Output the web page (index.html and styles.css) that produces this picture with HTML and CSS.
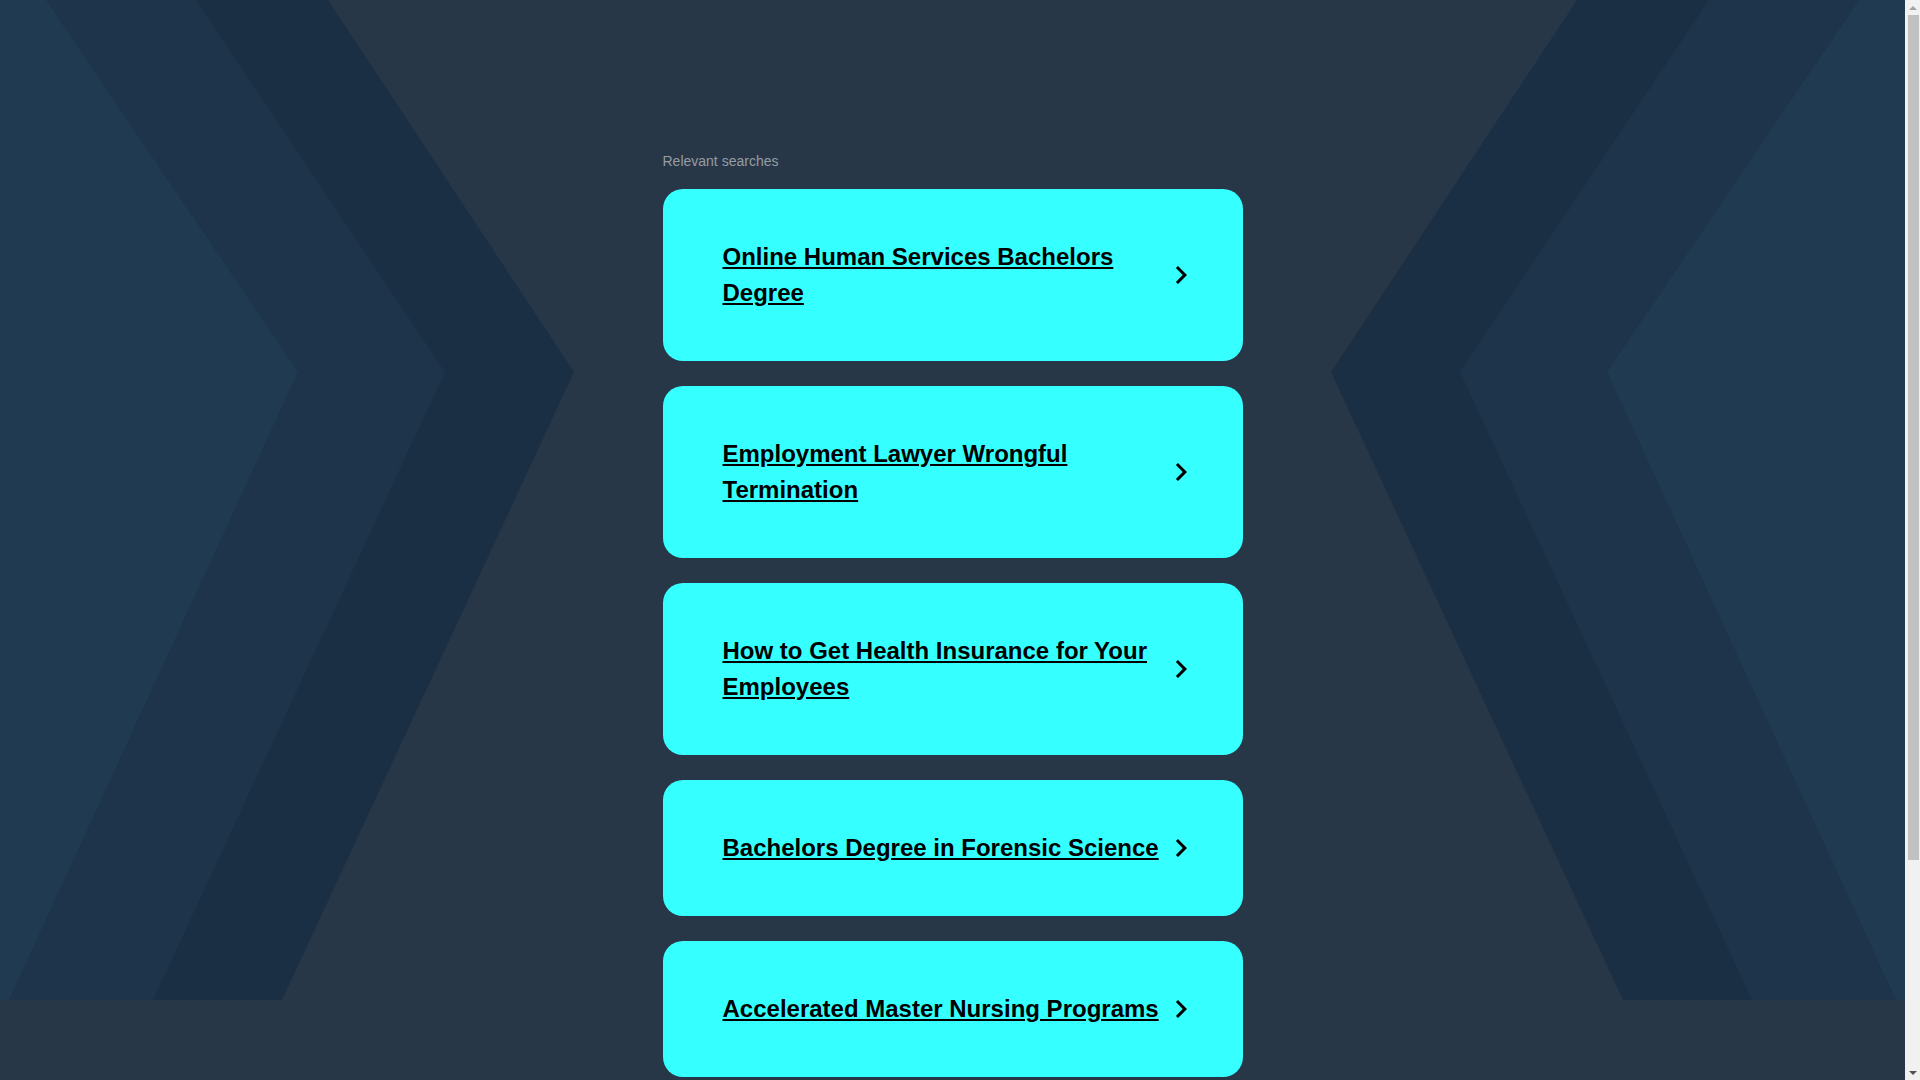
FILE: index.html
```html
<!DOCTYPE html>
<html lang="en">
<head>
<meta charset="utf-8">
<title>Relevant searches</title>
<link rel="stylesheet" href="styles.css">
</head>
<body>
<div class="backdrop">
  <svg class="backdrop-art" viewBox="0 0 1905 1000" preserveAspectRatio="none" aria-hidden="true">
    <polygon class="band-a" points="0,0 328,0 574,372 282,1000 0,1000"/>
    <polygon class="band-b" points="0,0 196,0 445,372 153,1000 0,1000"/>
    <polygon class="band-c" points="0,0 46,0 298,372 9,1000 0,1000"/>
    <polygon class="band-a" points="1905,0 1577,0 1331,372 1623,1000 1905,1000"/>
    <polygon class="band-b" points="1905,0 1709,0 1460,372 1752,1000 1905,1000"/>
    <polygon class="band-c" points="1905,0 1859,0 1607,372 1896,1000 1905,1000"/>
  </svg>
</div>
<main class="page">
  <h2 class="heading">Relevant searches</h2>
  <div class="list">
    <a class="card" href="#"><span class="card-text">Online Human Services Bachelors Degree</span><svg class="chev" viewBox="0 0 24 24"><path d="M10 6L8.59 7.41 13.17 12l-4.58 4.59L10 18l6-6z"/></svg></a>
    <a class="card" href="#"><span class="card-text">Employment Lawyer Wrongful Termination</span><svg class="chev" viewBox="0 0 24 24"><path d="M10 6L8.59 7.41 13.17 12l-4.58 4.59L10 18l6-6z"/></svg></a>
    <a class="card" href="#"><span class="card-text">How to Get Health Insurance for Your Employees</span><svg class="chev" viewBox="0 0 24 24"><path d="M10 6L8.59 7.41 13.17 12l-4.58 4.59L10 18l6-6z"/></svg></a>
    <a class="card" href="#"><span class="card-text">Bachelors Degree in Forensic Science</span><svg class="chev" viewBox="0 0 24 24"><path d="M10 6L8.59 7.41 13.17 12l-4.58 4.59L10 18l6-6z"/></svg></a>
    <a class="card" href="#"><span class="card-text">Accelerated Master Nursing Programs</span><svg class="chev" viewBox="0 0 24 24"><path d="M10 6L8.59 7.41 13.17 12l-4.58 4.59L10 18l6-6z"/></svg></a>
  </div>
</main>
<div class="scrollbar" aria-hidden="true">
  <span class="sb-arrow sb-up"></span>
  <span class="sb-thumb"></span>
  <span class="sb-arrow sb-down"></span>
</div>
</body>
</html>
```

FILE: styles.css
```css
html, body {
  margin: 0;
  padding: 0;
}
html {
  background: #283747;
}
body {
  background: #283747;
  font-family: "Liberation Sans", Arial, sans-serif;
  position: relative;
  min-height: 1300px;
  margin-right: 15px;
}
.backdrop {
  position: absolute;
  left: 0;
  top: 0;
  width: 100%;
  height: 1000px;
  overflow: hidden;
  z-index: 0;
}
.backdrop-art {
  display: block;
  width: 100%;
  height: 100%;
}
.band-a { fill: #1b2f44; }
.band-b { fill: #1d344b; }
.band-c { fill: #1f3a51; }

.page {
  position: relative;
  z-index: 1;
  width: 580px;
  margin: 0 auto;
  padding: 152px 0 220px;
}
.heading {
  margin: 0 0 19px;
  font-size: 14px;
  line-height: 18px;
  font-weight: normal;
  color: #969ca3;
}
.list {
  display: flex;
  flex-direction: column;
  gap: 25px;
}
.card {
  display: flex;
  align-items: center;
  background: #35ffff;
  border-radius: 20px;
  padding: 50px 44px 50px 60px;
  color: #000;
  text-decoration: none;
}
.card-text {
  flex: 1;
  font-size: 24px;
  line-height: 36px;
  font-weight: bold;
  text-decoration: underline;
}
.chev {
  flex-shrink: 0;
  width: 36px;
  height: 36px;
  fill: #000;
}

/* simulated browser scrollbar */
.scrollbar {
  position: fixed;
  top: 0;
  right: 0;
  width: 15px;
  height: 100vh;
  background: #f1f1f1;
  display: flex;
  flex-direction: column;
  align-items: center;
  z-index: 5;
}
.sb-arrow {
  flex-shrink: 0;
  width: 15px;
  height: 15px;
  display: flex;
  align-items: center;
  justify-content: center;
}
.sb-arrow::before {
  content: "";
  width: 0;
  height: 0;
  border-left: 4px solid transparent;
  border-right: 4px solid transparent;
}
.sb-up::before {
  border-bottom: 4px solid #a3a3a3;
}
.sb-down {
  margin-top: auto;
}
.sb-down::before {
  border-top: 4px solid #505050;
}
.sb-thumb {
  width: 11px;
  height: 845px;
  background: #c1c1c1;
  margin-left: 1px;
}
```
